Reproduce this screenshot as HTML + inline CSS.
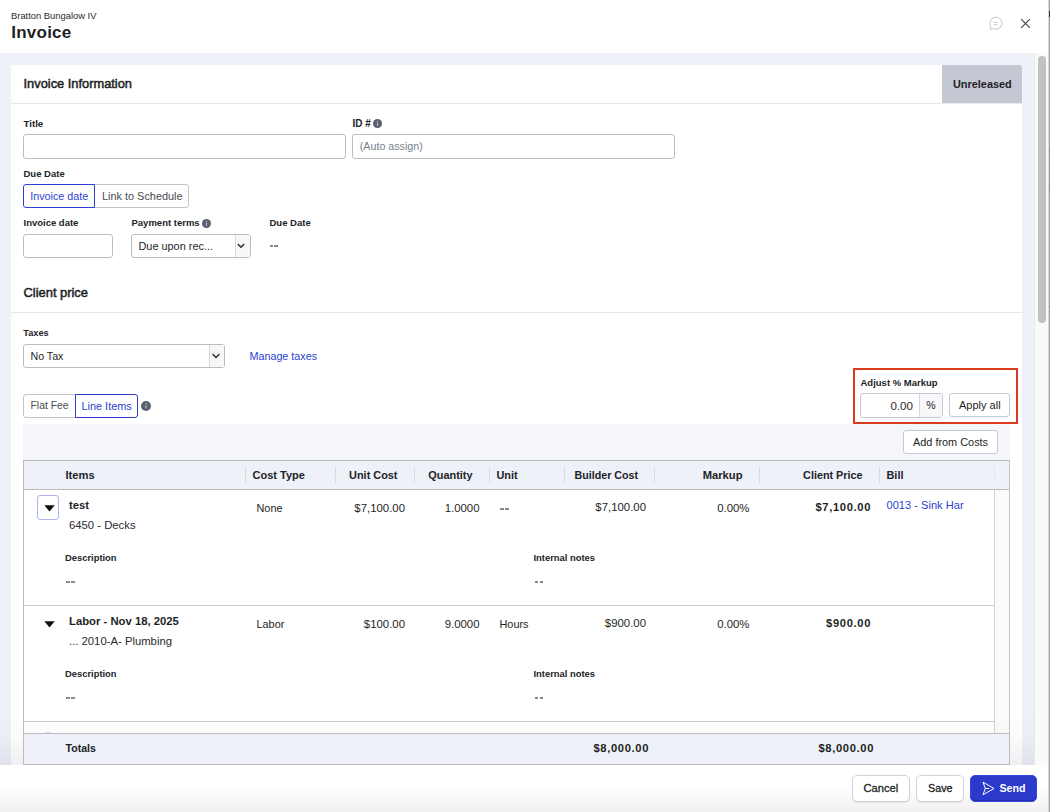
<!DOCTYPE html>
<html><head><meta charset="utf-8"><title>Invoice</title>
<style>
html,body{margin:0;padding:0;}
body{width:1050px;height:812px;overflow:hidden;position:relative;background:#fff;font-family:"Liberation Sans", sans-serif;}
.t{position:absolute;white-space:nowrap;line-height:1;font-family:"Liberation Sans", sans-serif;}
.b{position:absolute;}
</style></head><body>
<div class="t" style="left:11px;top:11.04px;font-size:9.4px;font-weight:400;color:#2a2b30;">Bratton Bungalow IV</div>
<div class="t" style="left:11.2px;top:24.21px;font-size:17.0px;font-weight:700;color:#1e1f24;letter-spacing:0.25px">Invoice</div>
<svg class="b" style="left:988px;top:16px" width="15" height="15" viewBox="0 0 15 15"><path d="M2.2 13.2 L2.9 10.6 A6 6 0 1 1 5.2 12.6 Z" fill="none" stroke="#cfcfcf" stroke-width="1.1" stroke-linejoin="round"/><line x1="5.4" y1="6.4" x2="9.6" y2="6.4" stroke="#c8c8c8" stroke-width="1"/><line x1="5.4" y1="8.6" x2="9.6" y2="8.6" stroke="#c8c8c8" stroke-width="1"/></svg>
<svg class="b" style="left:1020px;top:18px" width="11" height="11" viewBox="0 0 11 11"><path d="M1.6 1.6 L9.4 9.4 M9.4 1.6 L1.6 9.4" stroke="#454a5a" stroke-width="1.25" stroke-linecap="square"/></svg>
<div class="b" style="left:0px;top:53px;width:1034px;height:712px;background:#eef1f8"></div>
<div class="b" style="left:1034px;top:53px;width:14px;height:712px;background:#fafafa;border-left:1px solid #e8e8e8;box-sizing:border-box"></div>
<div class="b" style="left:1038px;top:56px;width:8px;height:267px;background:#c1c1c1;border-radius:4px"></div>
<div class="b" style="left:1048px;top:0px;width:1px;height:812px;background:#dadada"></div>
<div class="b" style="left:1049px;top:0px;width:1px;height:812px;background:#a2a2a2"></div>
<div class="b" style="left:1049px;top:11px;width:1px;height:6px;background:#1b2d55"></div>
<div class="b" style="left:1049px;top:149px;width:1px;height:1px;background:#6c7282"></div>
<div class="b" style="left:1049px;top:150px;width:1px;height:40px;background:#959aa6"></div>
<div class="b" style="left:1049px;top:190px;width:1px;height:1px;background:#6c7282"></div>
<div class="b" style="left:1049px;top:306px;width:1px;height:1px;background:#6c7282"></div>
<div class="b" style="left:11px;top:65px;width:1011px;height:760px;background:#fff;border-radius:3px"></div>
<div class="t" style="left:23.5px;top:78.12px;font-size:12.85px;font-weight:400;color:#1e1f24;-webkit-text-stroke:0.5px #1e1f24">Invoice Information</div>
<div class="b" style="left:942px;top:65px;width:80px;height:38px;background:#c3c8d3;border-top-right-radius:3px"></div>
<div class="t" style="left:953px;top:78.77px;font-size:10.9px;font-weight:700;color:#1f2126;">Unreleased</div>
<div class="b" style="left:11px;top:103px;width:1011px;height:1px;background:#e8e8ea"></div>
<div class="t" style="left:23.5px;top:118.79px;font-size:9.7px;font-weight:700;color:#222327;">Title</div>
<div class="b" style="left:23px;top:134px;width:323px;height:25px;border:1px solid #bdbdbd;border-radius:3px;box-sizing:border-box"></div>
<div class="t" style="left:352.5px;top:118.53px;font-size:10.0px;font-weight:700;color:#222327;">ID #</div>
<svg class="b" style="left:373.0px;top:119.0px" width="9" height="9" viewBox="0 0 9 9"><circle cx="4.5" cy="4.5" r="4.5" fill="#5b6070"/><rect x="3.95" y="3.3" width="1.1" height="3.6" fill="#b4b8c2"/><rect x="3.95" y="1.6" width="1.1" height="1.1" fill="#b4b8c2"/></svg>
<div class="b" style="left:352px;top:134px;width:323px;height:25px;border:1px solid #bdbdbd;border-radius:3px;box-sizing:border-box"></div>
<div class="t" style="left:359.8px;top:140.94px;font-size:10.7px;font-weight:400;color:#7b8190;">(Auto assign)</div>
<div class="t" style="left:23.5px;top:168.96px;font-size:9.5px;font-weight:700;color:#222327;">Due Date</div>
<div class="b" style="left:94px;top:184px;width:95px;height:24px;border:1px solid #c4c4c4;border-radius:0 3px 3px 0;box-sizing:border-box"></div>
<div class="b" style="left:23px;top:184px;width:72px;height:24px;border:1.5px solid #2c3fd1;border-radius:3px 0 0 3px;box-sizing:border-box"></div>
<div class="t" style="left:30.2px;top:190.90px;font-size:10.75px;font-weight:400;color:#2c3fd1;">Invoice date</div>
<div class="t" style="left:102px;top:190.77px;font-size:10.9px;font-weight:400;color:#4a4b50;">Link to Schedule</div>
<div class="t" style="left:23.5px;top:217.96px;font-size:9.5px;font-weight:700;color:#222327;">Invoice date</div>
<div class="b" style="left:23px;top:234px;width:90px;height:24px;border:1px solid #bdbdbd;border-radius:3px;box-sizing:border-box"></div>
<div class="t" style="left:131.5px;top:217.96px;font-size:9.5px;font-weight:700;color:#222327;">Payment terms</div>
<svg class="b" style="left:202.0px;top:219.0px" width="9" height="9" viewBox="0 0 9 9"><circle cx="4.5" cy="4.5" r="4.5" fill="#5b6070"/><rect x="3.95" y="3.3" width="1.1" height="3.6" fill="#b4b8c2"/><rect x="3.95" y="1.6" width="1.1" height="1.1" fill="#b4b8c2"/></svg>
<div class="b" style="left:131px;top:234px;width:120px;height:24px;border:1px solid #bdbdbd;border-radius:3px;box-sizing:border-box"></div>
<div class="b" style="left:235px;top:235px;width:15px;height:22px;background:#f7f7f7;border-left:1px solid #d8d8d8;box-sizing:border-box"></div>
<svg class="b" style="left:237.4px;top:243px" width="8" height="6" viewBox="0 0 8 6"><path d="M0.8 1 L4 4.3 L7.2 1" fill="none" stroke="#222" stroke-width="1.25"/></svg>
<div class="t" style="left:138.5px;top:240.77px;font-size:10.9px;font-weight:400;color:#1e1f24;">Due upon rec...</div>
<div class="t" style="left:269.5px;top:217.96px;font-size:9.5px;font-weight:700;color:#222327;">Due Date</div>
<div class="b" style="left:269.8px;top:245.1px;width:3.4px;height:1.8px;background:#85878c"></div>
<div class="b" style="left:274.3px;top:245.1px;width:3.4px;height:1.8px;background:#85878c"></div>
<div class="t" style="left:23.5px;top:286.88px;font-size:12.9px;font-weight:400;color:#1e1f24;-webkit-text-stroke:0.5px #1e1f24">Client price</div>
<div class="b" style="left:11px;top:312px;width:1011px;height:1px;background:#e8e8ea"></div>
<div class="t" style="left:23.3px;top:328.81px;font-size:9.2px;font-weight:700;color:#222327;">Taxes</div>
<div class="b" style="left:23px;top:344px;width:202px;height:24px;border:1px solid #bdbdbd;border-radius:3px;box-sizing:border-box"></div>
<div class="b" style="left:209px;top:345px;width:15px;height:22px;background:#f7f7f7;border-left:1px solid #d8d8d8;box-sizing:border-box"></div>
<svg class="b" style="left:211.5px;top:353px" width="8" height="6" viewBox="0 0 8 6"><path d="M0.6 1 L4 4.5 L7.4 1" fill="none" stroke="#222" stroke-width="1.25"/></svg>
<div class="t" style="left:30.5px;top:350.98px;font-size:10.65px;font-weight:400;color:#1e1f24;">No Tax</div>
<div class="t" style="left:249.5px;top:350.90px;font-size:10.75px;font-weight:400;color:#2c3fd1;">Manage taxes</div>
<div class="b" style="left:23px;top:394px;width:53px;height:24px;border:1px solid #c4c4c4;border-radius:3px 0 0 3px;box-sizing:border-box"></div>
<div class="b" style="left:75px;top:394px;width:63px;height:24px;border:1.5px solid #2c3fd1;border-radius:0 3px 3px 0;box-sizing:border-box"></div>
<div class="t" style="left:30.5px;top:401.20px;font-size:10.4px;font-weight:400;color:#4a4b50;">Flat Fee</div>
<div class="t" style="left:81.5px;top:400.77px;font-size:10.9px;font-weight:400;color:#2c3fd1;">Line Items</div>
<svg class="b" style="left:141.3px;top:401.0px" width="10" height="10" viewBox="0 0 10 10"><circle cx="5.0" cy="5.0" r="5.0" fill="#5b6070"/><rect x="4.45" y="3.8" width="1.1" height="3.6" fill="#b4b8c2"/><rect x="4.45" y="2.1" width="1.1" height="1.1" fill="#b4b8c2"/></svg>
<div class="b" style="left:853px;top:368px;width:165px;height:56px;border:2px solid #dc3a1f;box-sizing:border-box"></div>
<div class="t" style="left:860.5px;top:377.96px;font-size:9.5px;font-weight:700;color:#222327;">Adjust % Markup</div>
<div class="b" style="left:860px;top:393px;width:83px;height:25px;border:1px solid #c3c9d6;border-radius:3px;box-sizing:border-box"></div>
<div class="b" style="left:919px;top:394px;width:23px;height:23px;background:#f7f7f8;border-left:1px solid #d4d8e0;box-sizing:border-box"></div>
<div class="t" style="left:513px;width:400px;text-align:right;top:399.58px;font-size:11.6px;font-weight:400;color:#2a2b30;">0.00</div>
<div class="t" style="left:731px;width:400px;text-align:center;top:400.31px;font-size:10.5px;font-weight:400;color:#1e1f24;">%</div>
<div class="b" style="left:949px;top:393px;width:61px;height:24px;border:1px solid #c3c9d6;border-radius:3px;box-sizing:border-box"></div>
<div class="t" style="left:959px;top:399.69px;font-size:11.0px;font-weight:400;color:#1e1f24;">Apply all</div>
<div class="b" style="left:23px;top:424px;width:987px;height:36px;background:#f5f6fa"></div>
<div class="b" style="left:903px;top:430px;width:95px;height:24px;background:#fff;border:1px solid #c3c9d6;border-radius:3px;box-sizing:border-box"></div>
<div class="t" style="left:913px;top:436.77px;font-size:10.9px;font-weight:400;color:#1e1f24;">Add from Costs</div>
<div class="b" style="left:23px;top:460px;width:987px;height:30px;background:#eef1f8;border-top:1px solid #bcbcbc;border-bottom:1px solid #bcbcbc;box-sizing:border-box"></div>
<div class="b" style="left:245px;top:467px;width:1px;height:16px;background:#d9dce4"></div>
<div class="b" style="left:335px;top:467px;width:1px;height:16px;background:#d9dce4"></div>
<div class="b" style="left:414px;top:467px;width:1px;height:16px;background:#d9dce4"></div>
<div class="b" style="left:489px;top:467px;width:1px;height:16px;background:#d9dce4"></div>
<div class="b" style="left:564px;top:467px;width:1px;height:16px;background:#d9dce4"></div>
<div class="b" style="left:654px;top:467px;width:1px;height:16px;background:#d9dce4"></div>
<div class="b" style="left:759px;top:467px;width:1px;height:16px;background:#d9dce4"></div>
<div class="b" style="left:879px;top:467px;width:1px;height:16px;background:#d9dce4"></div>
<div class="b" style="left:994px;top:467px;width:1px;height:16px;background:#e4e6ec"></div>
<div class="t" style="left:65.5px;top:469.52px;font-size:11.2px;font-weight:700;color:#222327;">Items</div>
<div class="t" style="left:252.5px;top:469.69px;font-size:11.0px;font-weight:700;color:#222327;">Cost Type</div>
<div class="t" style="left:-2.5px;width:400px;text-align:right;top:469.77px;font-size:10.9px;font-weight:700;color:#222327;">Unit Cost</div>
<div class="t" style="left:72.5px;width:400px;text-align:right;top:469.77px;font-size:10.9px;font-weight:700;color:#222327;">Quantity</div>
<div class="t" style="left:496.5px;top:469.77px;font-size:10.9px;font-weight:700;color:#222327;">Unit</div>
<div class="t" style="left:574.5px;top:469.94px;font-size:10.7px;font-weight:700;color:#222327;">Builder Cost</div>
<div class="t" style="left:342.5px;width:400px;text-align:right;top:469.52px;font-size:11.2px;font-weight:700;color:#222327;">Markup</div>
<div class="t" style="left:462.5px;width:400px;text-align:right;top:469.86px;font-size:10.8px;font-weight:700;color:#222327;">Client Price</div>
<div class="t" style="left:886.5px;top:469.77px;font-size:10.9px;font-weight:700;color:#222327;">Bill</div>
<div class="b" style="left:994px;top:490px;width:16px;height:243px;background:#fbfbfb;border-left:1px solid #d4d4d4;box-sizing:border-box"></div>
<div class="b" style="left:37px;top:495px;width:22px;height:25px;border:1px solid #a9b6f2;border-radius:3px;box-sizing:border-box"></div>
<svg class="b" style="left:44px;top:505px" width="11" height="7" viewBox="0 0 11 7"><path d="M0.3 0.3 L10.7 0.3 L5.5 6.6 Z" fill="#111"/></svg>
<div class="t" style="left:69px;top:500.43px;font-size:11.3px;font-weight:700;color:#1e1f24;">test</div>
<div class="t" style="left:69px;top:520.43px;font-size:11.3px;font-weight:400;color:#2a2b30;">6450 - Decks</div>
<div class="t" style="left:256.5px;top:502.77px;font-size:10.9px;font-weight:400;color:#1e1f24;">None</div>
<div class="t" style="left:5px;width:400px;text-align:right;top:503.35px;font-size:11.4px;font-weight:400;color:#1e1f24;">$7,100.00</div>
<div class="t" style="left:79.5px;width:400px;text-align:right;top:503.35px;font-size:11.4px;font-weight:400;color:#1e1f24;">1.0000</div>
<div class="b" style="left:500.3px;top:508.1px;width:3.6px;height:1.8px;background:#85878c"></div>
<div class="b" style="left:505.20000000000005px;top:508.1px;width:3.6px;height:1.8px;background:#85878c"></div>
<div class="t" style="left:246px;width:400px;text-align:right;top:502.35px;font-size:11.4px;font-weight:400;color:#1e1f24;">$7,100.00</div>
<div class="t" style="left:349.5px;width:400px;text-align:right;top:503.35px;font-size:11.4px;font-weight:400;color:#1e1f24;">0.00%</div>
<div class="t" style="left:471.1px;width:400px;text-align:right;top:501.52px;font-size:11.2px;font-weight:700;color:#1e1f24;letter-spacing:0.65px">$7,100.00</div>
<div class="t" style="left:886.5px;top:499.60px;font-size:11.1px;font-weight:400;color:#2c3fd1;">0013 - Sink Har</div>
<div class="t" style="left:65px;top:553.04px;font-size:9.4px;font-weight:700;color:#222327;">Description</div>
<div class="b" style="left:66.1px;top:581.1px;width:3.6px;height:1.7px;background:#8a8c90"></div>
<div class="b" style="left:70.99999999999999px;top:581.1px;width:3.6px;height:1.7px;background:#8a8c90"></div>
<div class="t" style="left:533.5px;top:553.04px;font-size:9.4px;font-weight:700;color:#222327;">Internal notes</div>
<div class="b" style="left:534.6px;top:581.1px;width:3.6px;height:1.7px;background:#8a8c90"></div>
<div class="b" style="left:539.5px;top:581.1px;width:3.6px;height:1.7px;background:#8a8c90"></div>
<div class="b" style="left:23px;top:605px;width:971px;height:1px;background:#c6cddb"></div>
<svg class="b" style="left:44px;top:621px" width="11" height="7" viewBox="0 0 11 7"><path d="M0.3 0.3 L10.7 0.3 L5.5 6.6 Z" fill="#111"/></svg>
<div class="t" style="left:69px;top:616.43px;font-size:11.3px;font-weight:700;color:#1e1f24;">Labor - Nov 18, 2025</div>
<div class="t" style="left:69px;top:636.43px;font-size:11.3px;font-weight:400;color:#2a2b30;">... 2010-A- Plumbing</div>
<div class="t" style="left:256.5px;top:618.77px;font-size:10.9px;font-weight:400;color:#1e1f24;">Labor</div>
<div class="t" style="left:5px;width:400px;text-align:right;top:619.35px;font-size:11.4px;font-weight:400;color:#1e1f24;">$100.00</div>
<div class="t" style="left:79.5px;width:400px;text-align:right;top:619.35px;font-size:11.4px;font-weight:400;color:#1e1f24;">9.0000</div>
<div class="t" style="left:499.5px;top:618.77px;font-size:10.9px;font-weight:400;color:#1e1f24;">Hours</div>
<div class="t" style="left:246px;width:400px;text-align:right;top:618.35px;font-size:11.4px;font-weight:400;color:#1e1f24;">$900.00</div>
<div class="t" style="left:349.5px;width:400px;text-align:right;top:619.35px;font-size:11.4px;font-weight:400;color:#1e1f24;">0.00%</div>
<div class="t" style="left:471.1px;width:400px;text-align:right;top:617.52px;font-size:11.2px;font-weight:700;color:#1e1f24;letter-spacing:0.65px">$900.00</div>
<div class="t" style="left:65px;top:669.04px;font-size:9.4px;font-weight:700;color:#222327;">Description</div>
<div class="b" style="left:66.1px;top:697.1px;width:3.6px;height:1.7px;background:#8a8c90"></div>
<div class="b" style="left:70.99999999999999px;top:697.1px;width:3.6px;height:1.7px;background:#8a8c90"></div>
<div class="t" style="left:533.5px;top:669.04px;font-size:9.4px;font-weight:700;color:#222327;">Internal notes</div>
<div class="b" style="left:534.6px;top:697.1px;width:3.6px;height:1.7px;background:#8a8c90"></div>
<div class="b" style="left:539.5px;top:697.1px;width:3.6px;height:1.7px;background:#8a8c90"></div>
<div class="b" style="left:23px;top:721px;width:971px;height:1px;background:#c6cddb"></div>
<div class="b" style="left:0px;top:712px;width:1034px;height:53px;background:linear-gradient(180deg,rgba(30,30,60,0),rgba(30,30,60,0.02) 50%,rgba(30,30,60,0.07))"></div>
<div class="b" style="left:23px;top:460px;width:987px;height:305px;border-left:1px solid #bcbcbc;border-right:1px solid #c4c4c4;box-sizing:border-box"></div>
<div class="b" style="left:23px;top:733px;width:987px;height:32px;background:#eef1f8;border-top:1px solid #bcbcbc;border-bottom:1px solid #bcbcbc;border-left:1px solid #bcbcbc;border-right:1px solid #bcbcbc;box-sizing:border-box"></div>
<div class="t" style="left:65.5px;top:743.03px;font-size:10.6px;font-weight:700;color:#222327;">Totals</div>
<div class="b" style="left:45px;top:732px;width:6px;height:1px;background:#d4d9f6"></div>
<div class="t" style="left:249.10000000000002px;width:400px;text-align:right;top:742.52px;font-size:11.2px;font-weight:700;color:#1e1f24;letter-spacing:0.65px">$8,000.00</div>
<div class="t" style="left:474.1px;width:400px;text-align:right;top:742.52px;font-size:11.2px;font-weight:700;color:#1e1f24;letter-spacing:0.65px">$8,000.00</div>
<div class="b" style="left:0px;top:765px;width:1048px;height:47px;background:linear-gradient(180deg,#ffffff 0%,#ffffff 45%,#f1f1f1 100%)"></div>
<div class="b" style="left:852px;top:775px;width:58px;height:27px;background:#fff;border:1px solid #d2d2d2;border-radius:5px;box-sizing:border-box;box-shadow:0 1px 1px rgba(0,0,0,0.08)"></div>
<div class="t" style="left:863.5px;top:783.02px;font-size:11.2px;font-weight:400;color:#1e1f24;-webkit-text-stroke:0.3px #1e1f24">Cancel</div>
<div class="b" style="left:916px;top:775px;width:48px;height:27px;background:#fff;border:1px solid #d2d2d2;border-radius:5px;box-sizing:border-box;box-shadow:0 1px 1px rgba(0,0,0,0.08)"></div>
<div class="t" style="left:928px;top:783.36px;font-size:10.8px;font-weight:400;color:#1e1f24;-webkit-text-stroke:0.3px #1e1f24">Save</div>
<div class="b" style="left:970px;top:775px;width:67px;height:27px;background:#2b3acb;border:1px solid #3444de;border-radius:5px;box-sizing:border-box;box-shadow:inset 0 -1px 0 rgba(0,0,40,0.18)"></div>
<svg class="b" style="left:982px;top:781px" width="13" height="15" viewBox="0 0 13 15"><path d="M1 1.2 L12 7.5 L1 13.8 L3.3 7.5 Z M3.3 7.5 L7.2 7.5" fill="none" stroke="#fff" stroke-width="1" stroke-linejoin="round"/></svg>
<div class="t" style="left:999.5px;top:782.98px;font-size:10.65px;font-weight:700;color:#fff;">Send</div>
</body></html>
